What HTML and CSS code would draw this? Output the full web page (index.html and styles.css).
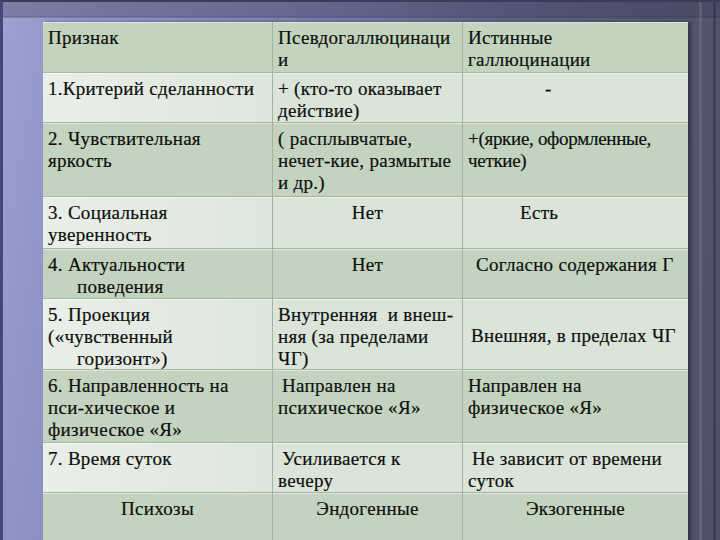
FILE: index.html
```html
<!DOCTYPE html>
<html lang="ru">
<head>
<meta charset="utf-8">
<title>Признак</title>
<link rel="stylesheet" href="styles.css">
</head>
<body>
<div class="frame">
  <div class="table">
    <div class="c hd">Признак</div>
    <div class="c hd">Псевдогаллюцинаци<br>и</div>
    <div class="c hd last">Истинные<br>галлюцинации</div>

    <div class="c lt first">1.Критерий сделанности</div>
    <div class="c lt">+ (кто-то оказывает<br>действие)</div>
    <div class="c lt last dash">-</div>

    <div class="c dk">2. Чувствительная<br>яркость</div>
    <div class="c dk">( расплывчатые,<br>нечет-кие, размытые<br>и др.)</div>
    <div class="c dk last tight">+(яркие, оформленные,<br>четкие)</div>

    <div class="c lt first">3. Социальная<br>уверенность</div>
    <div class="c lt center">Нет</div>
    <div class="c lt last est">Есть</div>

    <div class="c dk">4. Актуальности<br><span class="hang">поведения</span></div>
    <div class="c dk center">Нет</div>
    <div class="c dk last soglasno">Согласно содержания Г</div>

    <div class="c lt first">5. Проекция<br>(«чувственный<br><span class="hang">горизонт»)</span></div>
    <div class="c lt">Внутренняя&nbsp; и внеш-<br>няя (за пределами<br>ЧГ)</div>
    <div class="c lt last middle">Внешняя, в пределах ЧГ</div>

    <div class="c dk">6. Направленность на<br>пси-хическое и<br>физическое «Я»</div>
    <div class="c dk"><span class="sp"></span>Направлен на<br>психическое «Я»</div>
    <div class="c dk last">Направлен на<br>физическое «Я»</div>

    <div class="c lt first">7. Время суток</div>
    <div class="c lt"><span class="sp"></span>Усиливается к<br>вечеру</div>
    <div class="c lt last"><span class="sp"></span>Не зависит от времени<br>суток</div>

    <div class="c dk center">Психозы</div>
    <div class="c dk center">Эндогенные</div>
    <div class="c dk last center">Экзогенные</div>
  </div>
</div>
</body>
</html>
```
FILE: styles.css
```css
html, body {
  margin: 0;
  padding: 0;
}
body {
  width: 720px;
  height: 540px;
  overflow: hidden;
  background: #4f5068;
}
.frame {
  box-sizing: border-box;
  width: 720px;
  height: 540px;
  border-top: 2px solid #3b3c58;
  border-left: 3px solid #454877;
  padding: 20px 0 0 40px;
  background:
    linear-gradient(to right, rgba(0,0,0,0) 696px, rgba(120,122,150,0.6) 697px, rgba(120,122,150,0.6) 698px, rgba(0,0,0,0) 699px, rgba(0,0,0,0) 710px, rgba(40,40,60,0.6) 711px, rgba(40,40,60,0.6) 712px, rgba(0,0,0,0) 713px),
    linear-gradient(to bottom, rgba(60,60,90,0.35) 0px, rgba(60,60,90,0.35) 14px, rgba(40,40,60,0.5) 15px, rgba(0,0,0,0) 16px),
    linear-gradient(100deg, #9ca1d2 0%, #8f94c6 12%, #7c80b0 35%, #62648a 60%, #54556f 82%, #4f5068 100%);
}
.table {
  display: grid;
  grid-template-columns: 230px 190px 225px;
  grid-template-rows: 51px 50px 74px 52px 50px 71px 73px 50px 60px;
  width: 645px;
  box-shadow: 3px 0 3px rgba(20, 20, 40, 0.45);
  font-family: "Liberation Serif", "Times New Roman", serif;
  font-size: 19px;
  letter-spacing: 0.3px;
  line-height: 22px;
  color: #0e100e;
  -webkit-text-stroke: 0.2px #0e100e;
}
.c {
  box-sizing: border-box;
  padding: 5px 5px 0 5px;
  white-space: nowrap;
  border-right: 1px solid #a3b3a0;
  border-bottom: 1px solid #a7b6a4;
  box-shadow: inset 0 1px 0 rgba(255, 255, 255, 0.45);
}
.c.last {
  border-right: none;
}
.hd {
  background: #c3d4be;
}
.dk {
  background: #c4d3c0;
}
.lt {
  background: #dbe4d9;
}
.lt.first {
  background: linear-gradient(to right, #eaefe9, #dde6dc);
}
.center {
  text-align: center;
}
.tight {
  letter-spacing: -0.3px;
}
.dash {
  padding-left: 82px;
}
.est {
  padding-left: 57px;
}
.soglasno {
  padding-left: 13px;
}
.middle {
  display: flex;
  align-items: center;
  padding-top: 4px;
  padding-left: 8px;
}
.hang {
  padding-left: 29px;
}
.sp {
  display: inline-block;
  width: 4px;
}
```
